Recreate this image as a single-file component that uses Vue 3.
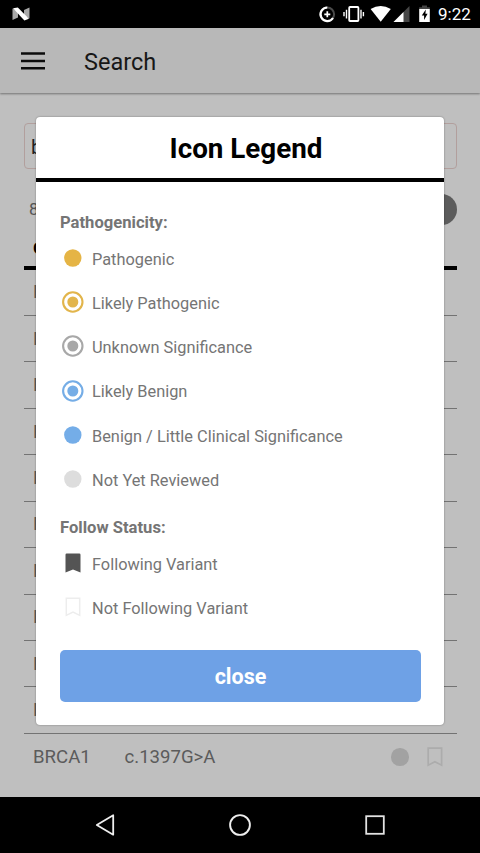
<script setup>
const pathogenicity = [
  { label: 'Pathogenic', color: '#e5b445', kind: 'solid' },
  { label: 'Likely Pathogenic', color: '#e2b54b', kind: 'ring' },
  { label: 'Unknown Significance', color: '#a8a8a8', kind: 'ring' },
  { label: 'Likely Benign', color: '#75ade6', kind: 'ring' },
  { label: 'Benign / Little Clinical Significance', color: '#74ade8', kind: 'solid' },
  { label: 'Not Yet Reviewed', color: '#dddddd', kind: 'solid' }
]
const follow = [
  { label: 'Following Variant', on: true },
  { label: 'Not Following Variant', on: false }
]
const rows = [
  ...Array.from({ length: 10 }, () => ({ gene: 'B', variant: '' })),
  { gene: 'BRCA1', variant: 'c.1397G>A' }
]
</script>

<template>
  <div class="screen">
    <header class="status">
      <svg class="nlogo" width="18" height="14" viewBox="0 0 18 14">
        <path d="M0.5 1.5L6 4.5V10.5L0.5 13Z" fill="#a9a9a9" />
        <path d="M17.5 0.5V11.5L12 9V3Z" fill="#a9a9a9" />
        <path d="M1 1.2L5.8 0.4L17 11.8L12.4 13.6Z" fill="#fff" />
      </svg>
      <svg class="sysicons" width="114" height="28" viewBox="318 0 114 28">
        <circle cx="327.3" cy="14.3" r="6.8" fill="none" stroke="#4b4b4b" stroke-width="2" />
        <path d="M327.3 7.5A6.8 6.8 0 1 0 333 18" fill="none" stroke="#fff" stroke-width="2.2" />
        <path d="M324.3 14.3h6M327.3 11.3v6" stroke="#fff" stroke-width="1.7" />
        <rect x="349.2" y="7" width="9.2" height="14" rx="0.8" fill="none" stroke="#fff" stroke-width="1.8" />
        <path d="M346.5 9.7v8.8M344 12v4.2M361 9.7v8.8M363.4 12v4.2" stroke="#fff" stroke-width="1.4" />
        <path d="M370.6 9Q380.7 2.8 390.8 9L380.7 21.8Z" fill="#fff" />
        <path d="M409.5 6V22H393.5Z" fill="#474747" />
        <path d="M403.5 12V22H393.5Z" fill="#fff" />
        <path d="M419.2 9V7.2H422V5.5H427V7.2H429.8V9Z" fill="#454545" />
        <path d="M419.2 9H429.8V22H419.2Z" fill="#fff" />
        <path d="M425.8 9.5L421.8 15.6H424.1V20L427.6 13.7H425.4Z" fill="#000" />
      </svg>
      <span class="time">9:22</span>
    </header>

    <div class="appbar">
      <svg width="24" height="18" viewBox="0 0 24 18">
        <path d="M0 1.6h24M0 8.9h24M0 16.2h24" stroke="#0c0c0c" stroke-width="2.5" />
      </svg>
      <h1>Search</h1>
    </div>

    <main class="page">
      <div class="field">b</div>
      <div class="summary"><span>8</span><i class="info"></i></div>
      <div class="thead">G</div>
      <div v-for="(r, i) in rows" :key="i" class="trow">
        <span class="gene">{{ r.gene }}</span>
        <template v-if="r.variant">
          <span class="variant">{{ r.variant }}</span>
          <i class="mark"></i>
          <svg class="save" width="16" height="20" viewBox="0 0 16 20">
            <path d="M1.2 1.2H14.6V18.2L7.9 14.8L1.2 18.2Z" fill="none" stroke="#acacac" stroke-width="1.7" />
          </svg>
        </template>
      </div>
    </main>

    <nav class="nav">
      <svg width="480" height="56" viewBox="0 0 480 56">
        <path d="M96.8 28L113.2 18.3V37.7Z" fill="none" stroke="#eee" stroke-width="1.8" stroke-linejoin="round" />
        <circle cx="240" cy="28" r="9.9" fill="none" stroke="#eee" stroke-width="1.9" />
        <rect x="366.2" y="19.2" width="17.6" height="17.6" fill="none" stroke="#e2e2e2" stroke-width="1.8" />
      </svg>
    </nav>

    <section class="modal">
      <h2>Icon Legend</h2>
      <div class="body">
        <h3>Pathogenicity:</h3>
        <div v-for="p in pathogenicity" :key="p.label" class="item">
          <svg width="26" height="26" viewBox="0 0 26 26">
            <template v-if="p.kind === 'ring'">
              <circle cx="12.8" cy="13" r="9.7" fill="none" :stroke="p.color" stroke-width="2.1" />
              <circle cx="12.8" cy="13" r="5.5" :fill="p.color" />
            </template>
            <circle v-else cx="12.8" cy="13" r="8.7" :fill="p.color" />
          </svg>
          <span>{{ p.label }}</span>
        </div>
        <h3 class="second">Follow Status:</h3>
        <div v-for="f in follow" :key="f.label" class="item">
          <svg width="26" height="26" viewBox="0 0 26 26">
            <path v-if="f.on" d="M6.7 3.5H19.3Q20.5 3.5 20.5 4.7V22.6L13 19.5L5.5 22.6V4.7Q5.5 3.5 6.7 3.5Z" fill="#545454" />
            <path v-else d="M6.3 4.3H19.7V21.4L13 18L6.3 21.4Z" fill="none" stroke="#ededed" stroke-width="1.5" />
          </svg>
          <span>{{ f.label }}</span>
        </div>
        <button type="button">close</button>
      </div>
    </section>
  </div>
</template>

<style>
body { margin: 0; background: #bfbfbf; }
</style>

<style scoped>
* { box-sizing: border-box; }
.screen {
  position: relative;
  display: flex;
  flex-direction: column;
  width: 480px;
  height: 853px;
  overflow: hidden;
  background: #bfbfbf;
  font-family: Roboto, "Liberation Sans", sans-serif;
}
.status {
  display: flex;
  align-items: center;
  height: 28px;
  padding: 0 9px 0 12px;
  background: #000;
  color: #fff;
}
.sysicons { margin-left: auto; }
.time { width: 33px; margin-left: 6px; font-size: 17px; line-height: 29px; white-space: nowrap; }
.appbar {
  display: flex;
  align-items: center;
  gap: 39px;
  height: 65px;
  padding: 1px 21px 0;
  background: #b8b8b8;
  box-shadow: 0 1px 2px rgba(0, 0, 0, .4);
}
h1, h2, h3 { margin: 0; }
h1 { padding-top: 1px; font-size: 23.5px; font-weight: 400; color: #171717; }
.page { flex: 1; padding: 30px 23px 0 24px; min-height: 0; }
.field {
  height: 46px;
  padding-left: 6px;
  border: 1px solid #b29f9d;
  border-radius: 4px;
  font-size: 20px;
  line-height: 46px;
  color: #222;
}
.summary {
  display: flex;
  align-items: center;
  justify-content: space-between;
  height: 80px;
  padding: 0 0 0 5px;
  font-size: 17px;
  color: #555;
}
.info { width: 31px; height: 31px; border-radius: 50%; background: #5c5c5c; }
.thead {
  height: 23.5px;
  margin-top: -3px;
  padding-left: 9px;
  border-bottom: 4px solid #000;
  font-size: 17px;
  font-weight: 700;
  line-height: 4px;
  color: #000;
}
.trow {
  display: flex;
  align-items: center;
  height: 46.45px;
  padding: 0 14.5px 0 9px;
  border-bottom: 1px solid #737373;
  font-size: 18.6px;
  color: #5b5b5b;
}
.trow:last-child { border-bottom: 0; }
.gene { width: 91.5px; }
.mark { width: 17.5px; height: 17.5px; margin-left: auto; border-radius: 50%; background: #a2a2a2; }
.save { margin-left: 18px; }
.nav { height: 56px; background: #000; }
.nav svg { display: block; }
.modal {
  position: absolute;
  left: 36px;
  top: 117px;
  width: 408px;
  height: 608px;
  border-radius: 4px;
  background: #fff;
  box-shadow: 0 0 2px rgba(0, 0, 0, .4);
}
h2 {
  height: 64.5px;
  padding-left: 12px;
  border-bottom: 4px solid #000;
  font-size: 27.8px;
  line-height: 64px;
  text-align: center;
  color: #000;
}
.body { padding: 29px 23px 0 24px; }
h3 { height: 25.5px; font-size: 16.6px; line-height: 24px; color: #757575; }
.item {
  display: flex;
  align-items: center;
  gap: 6px;
  height: 44.2px;
  font-size: 16.35px;
  color: #757575;
}
.item svg { flex: none; }
.item span { padding-top: 2.6px; white-space: nowrap; }
.second { margin-top: 14.5px; }
button {
  display: block;
  width: 361px;
  height: 52px;
  margin-top: 20.2px;
  padding: 0;
  border: 0;
  border-radius: 5px;
  background: #6ea1e6;
  font: 700 21.5px/54px Roboto, sans-serif;
  color: #fff;
}
</style>
